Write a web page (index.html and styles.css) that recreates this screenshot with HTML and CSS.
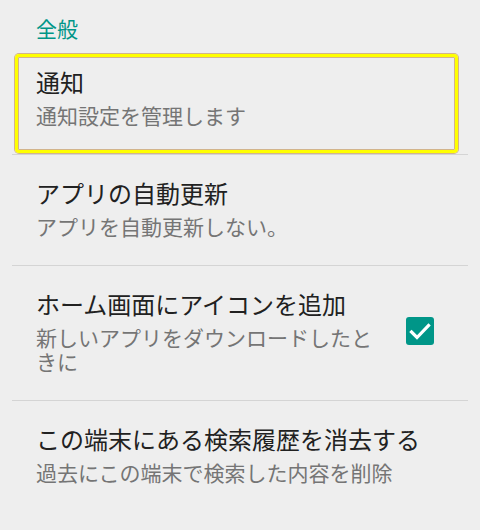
FILE: index.html
```html
<!DOCTYPE html>
<html lang="ja">
<head>
<meta charset="utf-8">
<link rel="stylesheet" href="styles.css">
</head>
<body>
<div class="header">全般</div>
<div class="list">
  <div class="row">
    <div class="highlight"></div>
    <div class="text">
      <div class="title">通知</div>
      <div class="summary">通知設定を管理します</div>
    </div>
  </div>
  <div class="row">
    <div class="text">
      <div class="title">アプリの自動更新</div>
      <div class="summary">アプリを自動更新しない。</div>
    </div>
  </div>
  <div class="row">
    <div class="text">
      <div class="title">ホーム画面にアイコンを追加</div>
      <div class="summary">新しいアプリをダウンロードしたときに</div>
    </div>
    <div class="checkbox">
      <svg width="28" height="28" viewBox="0 0 28 28"><polyline points="5.5,15 11,20.5 22.5,8.5" fill="none" stroke="#fff" stroke-width="3.2" stroke-linecap="square"/></svg>
    </div>
  </div>
  <div class="row last">
    <div class="text">
      <div class="title">この端末にある検索履歴を消去する</div>
      <div class="summary">過去にこの端末で検索した内容を削除</div>
    </div>
  </div>
</div>
</body>
</html>
```
FILE: styles.css
```css
html, body {
  margin: 0;
  padding: 0;
  background: #eeeeee;
  width: 480px;
  height: 530px;
  overflow: hidden;
  font-family: "Noto Sans CJK JP", "Noto Sans", sans-serif;
}
.header {
  padding: 16px 0 4px 36px;
  font-size: 21px;
  line-height: 24px;
  color: #009688;
}
.list {
  margin: 0 12px;
}
.row {
  position: relative;
  display: flex;
  align-items: center;
  padding: 22px 0 27px 24px;
  border-bottom: 1px solid #d4d4d4;
}
.row.last {
  border-bottom: none;
}
.text {
  flex: 1;
  min-width: 0;
}
.title {
  font-size: 24px;
  line-height: 32px;
  color: #212121;
}
.summary {
  margin-top: 5px;
  font-size: 21px;
  line-height: 24px;
  color: #757575;
}
.checkbox {
  flex: none;
  width: 28px;
  height: 28px;
  margin: 0 34px 0 24px;
  border-radius: 3px;
  background: #009688;
}
.checkbox svg {
  display: block;
}
.highlight {
  position: absolute;
  left: 3px;
  top: 10px;
  width: 443px;
  height: 99px;
  box-sizing: border-box;
  border: 3px solid #ffff00;
  border-radius: 4px;
  box-shadow: 0 0 0 1px #d2b48c, inset 0 0 0 1px #d2b48c;
  pointer-events: none;
}
```
